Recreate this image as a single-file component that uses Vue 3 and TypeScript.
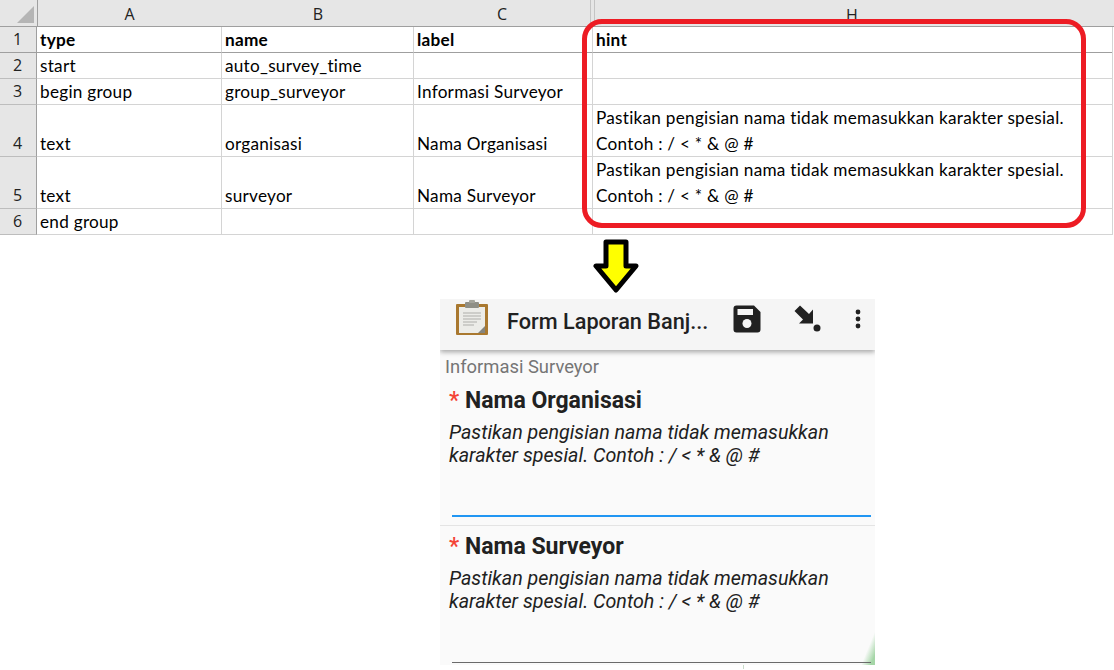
<script setup lang="ts">
interface Row { n: number; h: number; a: string; b: string; c: string; d: string[]; bold?: boolean }
const rows: Row[] = [
  { n: 1, h: 26, a: 'type', b: 'name', c: 'label', d: ['hint'], bold: true },
  { n: 2, h: 26, a: 'start', b: 'auto_survey_time', c: '', d: [] },
  { n: 3, h: 26, a: 'begin group', b: 'group_surveyor', c: 'Informasi Surveyor', d: [] },
  { n: 4, h: 52, a: 'text', b: 'organisasi', c: 'Nama Organisasi', d: ['Pastikan pengisian nama tidak memasukkan karakter spesial.', 'Contoh : / < * & @ #'] },
  { n: 5, h: 52, a: 'text', b: 'surveyor', c: 'Nama Surveyor', d: ['Pastikan pengisian nama tidak memasukkan karakter spesial.', 'Contoh : / < * & @ #'] },
  { n: 6, h: 26, a: 'end group', b: '', c: '', d: [] },
]
const questions = [
  { title: 'Nama Organisasi', active: true },
  { title: 'Nama Surveyor', active: false },
]
</script>

<template>
  <div class="page">
    <div class="sheet">
      <div class="head corner"><span class="tri"></span></div>
      <div class="head col a">A</div>
      <div class="head col b">B</div>
      <div class="head col c">C</div>
      <div class="head col h"><span>H</span></div>
      <template v-for="r in rows" :key="r.n">
        <div class="rownum" :class="{ first: r.bold }" :style="{ height: r.h + 'px' }">{{ r.n }}</div>
        <div class="cell" :class="{ bold: r.bold }">{{ r.a }}</div>
        <div class="cell" :class="{ bold: r.bold }">{{ r.b }}</div>
        <div class="cell" :class="{ bold: r.bold }">{{ r.c }}</div>
        <div class="cell hintcell" :class="{ bold: r.bold }">
          <div v-for="(l, i) in r.d" :key="i" class="hintline">{{ l }}</div>
        </div>
      </template>
      <div class="redbox"></div>
    </div>

    <div class="arrowrow">
      <svg width="46" height="56" viewBox="0 0 46 56">
        <path d="M13 3H33V27H43L23 51L3 27H13Z" fill="#ffff00" stroke="#000" stroke-width="5" stroke-linejoin="round" />
      </svg>
    </div>

    <div class="phone">
      <div class="toolbar">
        <svg class="clip" width="36" height="38" viewBox="0 0 36 38">
          <rect x="2" y="4" width="32" height="31" rx="1" fill="#a9782f" />
          <rect x="5" y="7" width="26" height="26" fill="#ecece8" />
          <path d="M9 13H27M9 16H27M9 19H27M9 22H23M9 25H20" stroke="#c2c2be" stroke-width="1.4" />
          <path d="M24 33L31 26V33Z" fill="#85857f" />
          <rect x="11" y="2" width="14" height="6" rx="1" fill="#8f8f86" />
          <rect x="15" y="0" width="6" height="3" rx="1" fill="#a5a59c" />
        </svg>
        <div class="apptitle">Form Laporan Banj...</div>
        <svg class="save" width="28" height="28" viewBox="0 0 28 28">
          <path d="M3.5 0.5H21L27.5 7V24.5A3 3 0 0 1 24.5 27.5H3.5A3 3 0 0 1 0.5 24.5V3.5A3 3 0 0 1 3.5 0.5Z" fill="#212121" />
          <rect x="4.5" y="4" width="15.5" height="6" fill="#f5f5f5" />
          <circle cx="14" cy="18.5" r="4.5" fill="#f5f5f5" />
        </svg>
        <svg class="dl" width="30" height="28" viewBox="0 0 30 28">
          <path d="M6 0.5L0.5 6L9 14.5L5 18.5H19V4.5L15 9L6 0.5Z" fill="#212121" />
          <circle cx="23" cy="23" r="3.5" fill="#212121" />
        </svg>
        <svg class="more" width="6" height="20" viewBox="0 0 6 20">
          <circle cx="3" cy="3" r="2.4" fill="#212121" />
          <circle cx="3" cy="10" r="2.4" fill="#212121" />
          <circle cx="3" cy="17" r="2.4" fill="#212121" />
        </svg>
      </div>
      <div class="content">
        <div class="corner-green"></div>
        <div class="grouplabel">Informasi Surveyor</div>
        <div v-for="q in questions" :key="q.title" class="question">
          <div class="qtitle"><span class="req">*</span> {{ q.title }}</div>
          <div class="qhint">Pastikan pengisian nama tidak memasukkan<br />karakter spesial. Contoh : / &lt; * &amp; @ #</div>
          <div class="field" :class="{ active: q.active }"></div>
        </div>
      </div>
    </div>
    <div class="tick"></div>
  </div>
</template>

<style>
html, body { margin: 0; background: #fff; }
</style>

<style scoped>
.page {
  width: 1114px;
  height: 670px;
  overflow: hidden;
  position: relative;
  background: #fff;
}
.sheet {
  position: relative;
  display: grid;
  grid-template-columns: 37px 185px 192px 179px 521px;
  font-family: Lato, "Open Sans", sans-serif;
  color: #000;
  font-size: 17.2px;
}
.head {
  height: 26px;
  background: #e6e6e6;
  border-bottom: 1px solid #9f9f9f;
  border-right: 1px solid #c4c4c4;
  box-sizing: content-box;
  text-align: center;
  line-height: 28px;
  font-size: 16px;
  color: #222;
  font-family: "Open Sans", sans-serif;
  margin-right: -1px;
}
.corner { position: relative; border-right-color: #9f9f9f; }
.tri {
  position: absolute;
  right: 3px;
  bottom: 3px;
  width: 0;
  height: 0;
  border-left: 17px solid transparent;
  border-bottom: 17px solid #b5b5b5;
}
.col.c {
  border-right: none;
  margin-right: 0;
  padding-right: 3px;
  box-shadow: inset -2px 0 #e6e6e6, inset -3px 0 #c4c4c4;
}
.col.h {
  border-right: none;
  margin-right: 0;
  padding-right: 3px;
  overflow: hidden;
  box-shadow: inset 1px 0 #e6e6e6, inset 2px 0 #c4c4c4;
}
.col.h span { display: block; margin-top: 1px; }
.rownum {
  background: #e6e6e6;
  border-bottom: 1px solid #bdbdbd;
  border-right: 1px solid #9f9f9f;
  box-sizing: border-box;
  display: flex;
  align-items: flex-end;
  justify-content: center;
  padding-right: 1px;
  font-size: 16px;
  line-height: 26px;
  color: #222;
  font-family: "Open Sans", sans-serif;
}
.cell {
  border-bottom: 1px solid #d4d4d4;
  border-right: 1px solid #d4d4d4;
  box-sizing: border-box;
  padding: 0 3px 0 3px;
  display: flex;
  flex-direction: column;
  justify-content: flex-end;
  line-height: 25px;
  white-space: nowrap;
  letter-spacing: 0.25px;
}
.cell.bold { font-weight: 700; border-bottom-color: #9f9f9f; }
.rownum.first { border-bottom-color: #9f9f9f; }
.hintcell {
  padding-left: 3px;
  margin-right: 1px;
  border-bottom: none;
  box-shadow: inset 0 -1px #d4d4d4;
}
.hintcell.bold { box-shadow: inset 0 -1px #9f9f9f; }
.hintline { height: 26px; line-height: 26px; }
.redbox {
  position: absolute;
  left: 582px;
  top: 19px;
  width: 494px;
  height: 199px;
  border: 5px solid #ed1c24;
  border-radius: 20px;
  pointer-events: none;
}
.arrowrow {
  height: 64px;
  padding: 4px 0 0 593px;
  box-sizing: border-box;
}
.arrowrow svg { display: block; }
.phone {
  margin-left: 440px;
  width: 435px;
  height: 366px;
  background: #fafafa;
  overflow: hidden;
  font-family: Roboto, sans-serif;
  color: #212121;
}
.toolbar {
  position: relative;
  z-index: 1;
  height: 51px;
  background: #f5f5f5;
  box-shadow: 0 2px 5px rgba(0, 0, 0, 0.35);
  display: flex;
  align-items: center;
}
.clip { margin: -11px 0 0 14px; flex: none; }
.apptitle {
  margin-left: 17px;
  width: 209px;
  font-size: 21.7px;
  font-weight: 500;
  white-space: nowrap;
  margin-top: -6px;
}
.save { flex: none; margin: -12px 0 0 17px; }
.dl { flex: none; margin: -12px 0 0 33px; }
.more { flex: none; margin: -11px 0 0 31px; }
.content { position: relative; height: 315px; }
.grouplabel {
  padding: 5px 0 0 5px;
  margin-bottom: 2px;
  font-size: 18.4px;
  line-height: 23px;
  color: #757575;
}
.question {
  padding: 7px 4px 0 9px;
  height: 146px;
  box-sizing: border-box;
  border-bottom: 1px solid #e4e4e4;
  position: relative;
}
.qtitle {
  font-size: 23px;
  font-weight: 700;
  line-height: 28px;
}
.req { color: #f44336; font-weight: 500; }
.qhint {
  font-size: 19.7px;
  font-style: italic;
  line-height: 23px;
  margin-top: 6px;
}
.field {
  position: absolute;
  left: 12px;
  right: 4px;
  bottom: 8px;
  height: 1px;
  background: #6b6b6b;
}
.field.active { height: 2px; background: #2196f3; }
.corner-green {
  position: absolute;
  right: 0;
  bottom: 0;
  width: 14px;
  height: 34px;
  background: linear-gradient(to bottom right, rgba(165, 214, 167, 0) 50%, #a5d6a7 85%);
}
.tick {
  position: absolute;
  left: 743px;
  top: 665px;
  width: 1px;
  height: 4px;
  background: #c8dcc8;
}
</style>
